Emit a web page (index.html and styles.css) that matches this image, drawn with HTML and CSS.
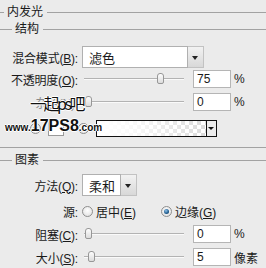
FILE: index.html
```html
<!DOCTYPE html>
<html lang="zh">
<head>
  <meta charset="UTF-8" />
  <title>内发光</title>
  <link rel="stylesheet" href="styles.css">
</head>
<body>
  <div class="panel">
    <div class="legend title">内发光</div>

    <div class="group">
      <div class="legend sub">结构</div>

      <div class="row r-blend">
        <span class="label">混合模式(<u>B</u>):</span>
        <div class="select wide"><span class="val">滤色</span><span class="drop"></span></div>
      </div>

      <div class="row r-opacity">
        <span class="label">不透明度(<u>O</u>):</span>
        <div class="slider"><span class="thumb" style="left:73px"></span></div>
        <div class="num">75</div><span class="unit">%</span>
      </div>

      <div class="row r-noise">
        <span class="label faint">杂色(<u>N</u>):</span>
        <div class="slider"><span class="thumb" style="left:1px"></span></div>
        <div class="num">0</div><span class="unit">%</span>
      </div>

      <div class="row r-color">
        <span class="radio on"></span>
        <span class="swatch"></span>
        <span class="radio"></span>
        <div class="gradient"><span class="fill"></span><span class="gdrop"></span></div>
      </div>
    </div>

    <div class="legend sub g2">图素</div>

    <div class="row r-method">
      <span class="label">方法(<u>Q</u>):</span>
      <div class="select narrow"><span class="val">柔和</span><span class="drop"></span></div>
    </div>

    <div class="row r-source">
      <span class="label">源:</span>
      <span class="radio"></span><span class="opt">居中(<u>E</u>)</span>
      <span class="radio on second"></span><span class="opt">边缘(<u>G</u>)</span>
    </div>

    <div class="row r-choke">
      <span class="label">阻塞(<u>C</u>):</span>
      <div class="slider"><span class="thumb" style="left:1px"></span></div>
      <div class="num">0</div><span class="unit">%</span>
    </div>

    <div class="row r-size">
      <span class="label">大小(<u>S</u>):</span>
      <div class="slider"><span class="thumb" style="left:4px"></span></div>
      <div class="num">5</div><span class="unit">像素</span>
    </div>

    <div class="mark">
      <div class="mark-top">一起ps吧</div>
      <div class="mark-url">www.<b>17PS8</b>.com</div>
    </div>
  </div>
</body>
</html>
```

FILE: styles.css
```css
body {
  margin: 0;
  background: #ebebeb;
  font-family: "Liberation Sans", "Noto Sans CJK SC", sans-serif;
  font-size: 12px;
  color: #1a1a1a;
}
u {
  text-decoration: underline;
  text-underline-offset: 1px;
}
.panel {
  position: relative;
  width: 266px;
  height: 268px;
  overflow: hidden;
  background: #ebebeb;
}

/* group headings with etched lines */
.legend {
  display: flex;
  align-items: center;
  gap: 3px;
  height: 12px;
  line-height: 12px;
}
.legend::before,
.legend::after {
  content: "";
  border-top: 1px solid #a2a2a2;
}
.legend::before { width: 4px; }
.legend::after { flex: 1; margin-left: 1px; }
.title { margin-top: 6px; height: 12px; }
.sub { margin-top: 5px; }
.sub::before { width: 12px; }
.group {
  border-bottom: 1px solid #a2a2a2;
  padding-bottom: 10px;
}
.g2 { margin-top: 6px; }

/* rows */
.row {
  display: flex;
  align-items: center;
}
.label {
  width: 78px;
  text-align: right;
  white-space: nowrap;
  letter-spacing: -0.2px;
}
.faint { color: #8a8a8a; }
.r-blend { margin-top: 11px; height: 22px; }
.r-opacity { margin-top: 2px; height: 18px; }
.r-noise { margin-top: 5px; height: 18px; }
.r-color { margin-top: 9px; height: 17px; padding-left: 30px; }
.r-method { margin-top: 8px; height: 22px; }
.r-source { margin-top: 8px; height: 14px; }
.r-choke { margin-top: 7px; height: 18px; }
.r-size { margin-top: 5px; height: 18px; }

/* select */
.select {
  display: flex;
  height: 22px;
  margin-left: 4px;
  box-sizing: border-box;
}
.select .val {
  display: flex;
  align-items: center;
  padding-left: 6px;
  background: #fff;
  border: 1px solid #b0b0b0;
  box-sizing: border-box;
  font-size: 13px;
}
.wide .val { width: 106px; }
.narrow .val { width: 39px; }
.drop {
  position: relative;
  width: 16px;
  height: 22px;
  box-sizing: border-box;
  border: 1px solid #c2c2c2;
  border-left: none;
  background: linear-gradient(#f2f2f2, #d8d8d8);
}
.drop::after {
  content: "";
  position: absolute;
  left: 4px;
  top: 9px;
  border-left: 3px solid transparent;
  border-right: 3px solid transparent;
  border-top: 4px solid #222;
}

/* slider */
.slider {
  position: relative;
  width: 100px;
  height: 14px;
  margin-left: 6px;
}
.slider::before {
  content: "";
  position: absolute;
  left: 0;
  right: 0;
  top: 6px;
  border-top: 1px solid #b3b3b3;
  border-bottom: 1px solid #fafafa;
}
.thumb {
  position: absolute;
  top: 1px;
  width: 7px;
  height: 11px;
  box-sizing: border-box;
  border: 1px solid #979797;
  border-radius: 3px 3px 2px 2px;
  background: linear-gradient(#fdfdfd, #dcdcdc);
}

/* numeric field */
.num {
  width: 38px;
  height: 18px;
  margin-left: 9px;
  padding-left: 3px;
  box-sizing: border-box;
  border: 1px solid #b5b5b5;
  background: #fff;
  line-height: 16px;
  font-size: 12px;
}
.unit {
  margin-left: 3px;
  font-size: 12px;
}

/* radios */
.radio {
  width: 11px;
  height: 11px;
  box-sizing: border-box;
  border-radius: 50%;
  border: 1px solid #8e8e8e;
  background: radial-gradient(circle at 50% 40%, #fff, #dcdcdc);
  display: flex;
  align-items: center;
  justify-content: center;
  flex: none;
}
.radio.on::after {
  content: "";
  width: 5px;
  height: 5px;
  border-radius: 50%;
  background: radial-gradient(circle at 40% 35%, #8fc3ea, #1e5a8c 60%, #0e3558);
}
.r-source .radio { margin-left: 4px; }
.r-source .radio.second { margin-left: 25px; }
.opt { margin-left: 3px; }

/* colour row */
.swatch {
  width: 16px;
  height: 15px;
  margin-left: 7px;
  box-sizing: border-box;
  border: 1px solid #9a9a9a;
  background: #fff;
}
.r-color .radio:nth-child(3) { margin-left: 14px; }
.gradient {
  display: flex;
  width: 121px;
  height: 17px;
  margin-left: 7px;
  box-sizing: border-box;
  border: 1px solid #111;
  background: #fff;
}
.gradient .fill {
  flex: 1;
  background-color: #fff;
  background-image:
    linear-gradient(90deg, #fff 0%, rgba(255,255,255,0.85) 35%, rgba(255,255,255,0.2) 100%),
    linear-gradient(45deg, #d2d2d2 25%, transparent 25%, transparent 75%, #d2d2d2 75%),
    linear-gradient(45deg, #d2d2d2 25%, transparent 25%, transparent 75%, #d2d2d2 75%);
  background-size: 100% 100%, 8px 8px, 8px 8px;
  background-position: 0 0, 0 0, 4px 4px;
}
.gdrop {
  position: relative;
  width: 9px;
  border-left: 1px solid #111;
  background: #ececec;
}
.gdrop::after {
  content: "";
  position: absolute;
  left: 1px;
  top: 6px;
  border-left: 3px solid transparent;
  border-right: 3px solid transparent;
  border-top: 3px solid #111;
}

/* watermark overlay */
.mark {
  position: absolute;
  left: 5px;
  top: 91px;
  color: #111;
  text-shadow: 1px 0 #fff, -1px 0 #fff, 0 1px #fff, 0 -1px #fff;
  pointer-events: none;
}
.mark-top {
  margin-left: 25px;
  font-family: "Noto Sans CJK SC", sans-serif;
  font-size: 16px;
  line-height: 24px;
  letter-spacing: -2.5px;
}
.mark-url {
  margin-top: 3px;
  font-family: "Liberation Sans", sans-serif;
  font-weight: bold;
  font-size: 10px;
  line-height: 16px;
}
.mark-url b {
  font-size: 16px;
}
```
